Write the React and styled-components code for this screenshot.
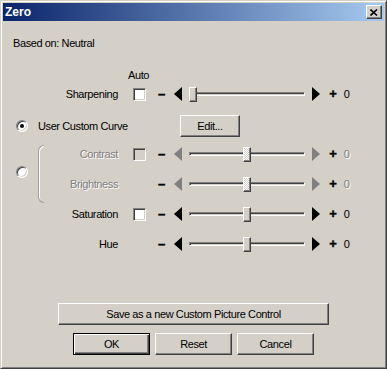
import React from "react";
import styled, { createGlobalStyle, css } from "styled-components";

const FACE = "#d4d0c8";

const GlobalStyle = createGlobalStyle`
  html, body {
    margin: 0;
    padding: 0;
    background: ${FACE};
  }
  body {
    font-family: "Liberation Sans", Arial, sans-serif;
    font-size: 11px;
    letter-spacing: -0.4px;
    color: #000;
  }
`;

const etched = css`
  color: #808080;
  text-shadow: 1px 1px #fff;
`;

const Window = styled.div`
  box-sizing: border-box;
  width: 387px;
  height: 369px;
  display: flex;
  flex-direction: column;
  padding: 2px;
  background: ${FACE};
  border: 1px solid;
  border-color: ${FACE} #404040 #404040 ${FACE};
  box-shadow: inset 1px 1px #fff, inset -1px -1px #808080;
`;

const TitleBar = styled.div`
  height: 18px;
  flex-shrink: 0;
  display: flex;
  align-items: center;
  justify-content: space-between;
  padding: 0 2px;
  background: linear-gradient(to right, #0a246a, #a6caf0);
`;

const Title = styled.span`
  color: #fff;
  font-weight: bold;
  font-size: 12px;
  letter-spacing: 0;
`;

const CloseButton = styled.div`
  box-sizing: border-box;
  width: 16px;
  height: 14px;
  display: flex;
  align-items: center;
  justify-content: center;
  background: ${FACE};
  border: 1px solid;
  border-color: #fff #404040 #404040 #fff;
  box-shadow: inset -1px -1px #808080;
`;

const Body = styled.div`
  flex: 1;
  display: flex;
  flex-direction: column;
  padding: 15px 10px 11px 10px;
`;

const Line = styled.div`
  line-height: 14px;
  height: 14px;
  margin-top: ${(p) => p.$mt || 0}px;
  margin-left: ${(p) => p.$ml || 0}px;
`;

const Row = styled.div`
  display: flex;
  align-items: center;
  height: 22px;
  margin-top: ${(p) => p.$mt || 0}px;
`;

const Label = styled.div`
  flex: 0 0 ${(p) => p.$width}px;
  text-align: ${(p) => p.$align || "right"};
  white-space: nowrap;
  ${(p) => p.$disabled && etched}
`;

const CheckSlot = styled.div`
  flex: 0 0 13px;
  height: 13px;
  margin-left: 15px;
`;

const CheckBox = styled.div`
  box-sizing: border-box;
  width: 13px;
  height: 13px;
  background: ${(p) => (p.$disabled ? FACE : "#fff")};
  border: 1px solid;
  border-color: #808080 #fff #fff #808080;
  box-shadow: inset 1px 1px #404040, inset -1px -1px ${FACE};
`;

const Sign = styled.span`
  flex: 0 0 7px;
  margin-left: ${(p) => p.$ml}px;
  font-weight: bold;
  font-size: 13px;
  line-height: 14px;
  text-align: center;
  letter-spacing: 0;
  -webkit-text-stroke: 0.4px #000;
`;

const ArrowBox = styled.svg`
  flex: 0 0 8px;
  margin-left: ${(p) => p.$ml}px;
`;

const Track = styled.div`
  position: relative;
  flex: 0 0 116px;
  height: 15px;
  margin-left: 7px;
  display: flex;
  align-items: center;
`;

const Channel = styled.div`
  box-sizing: border-box;
  width: 100%;
  height: 4px;
  margin-top: -1px;
  border: 1px solid;
  border-color: #808080 #fff #fff #808080;
  box-shadow: inset 1px 1px #404040;
`;

const Thumb = styled.div`
  position: absolute;
  top: 0;
  box-sizing: border-box;
  width: 8px;
  height: 15px;
  border: 1px solid;
  border-color: #fff #404040 #404040 #fff;
  box-shadow: inset -1px -1px #808080;
  background: ${FACE};
  ${(p) =>
    p.$disabled &&
    css`
      background: repeating-conic-gradient(#fff 0 25%, ${FACE} 0 50%) 0 0 / 2px 2px;
    `}
`;

const Value = styled.span`
  margin-left: 7px;
  ${(p) => p.$disabled && etched}
`;

const Radio = styled.div`
  box-sizing: border-box;
  flex: 0 0 12px;
  width: 12px;
  height: 12px;
  margin-left: 3px;
  margin-top: ${(p) => p.$mt || 0}px;
  align-self: ${(p) => (p.$mt ? "flex-start" : "center")};
  border-radius: 50%;
  background: #fff;
  border: 1px solid;
  border-color: #808080 #fff #fff #808080;
  box-shadow: inset 1px 1px #404040, inset -1px -1px ${FACE};
  display: flex;
  align-items: center;
  justify-content: center;
  &::after {
    content: "";
    display: ${(p) => (p.$checked ? "block" : "none")};
    width: 4px;
    height: 4px;
    border-radius: 50%;
    background: #000;
  }
`;

const Group = styled.div`
  display: flex;
  margin-top: 6px;
`;

const Bracket = styled.div`
  box-sizing: border-box;
  flex: 0 0 6px;
  height: 58px;
  margin: 2px 0 0 10px;
  border: 1px solid #a0a0a0;
  border-right: none;
  border-radius: 6px 0 0 6px;
  box-shadow: inset 1px 1px #fff;
`;

const GroupRows = styled.div`
  display: flex;
  flex-direction: column;
  gap: 8px;
`;

const Button = styled.div`
  box-sizing: border-box;
  width: ${(p) => p.$width}px;
  height: 22px;
  display: flex;
  align-items: center;
  justify-content: center;
  flex-shrink: 0;
  margin-left: ${(p) => p.$ml || 0}px;
  background: ${FACE};
  border: 1px solid;
  border-color: #fff #404040 #404040 #fff;
  box-shadow: inset -1px -1px #808080;
  ${(p) =>
    p.$default &&
    css`
      border-color: #000;
      box-shadow: inset 1px 1px #fff, inset -1px -1px #404040, inset -2px -2px #808080;
    `}
`;

const Footer = styled.div`
  margin-top: auto;
  display: flex;
  flex-direction: column;
  align-items: center;
  gap: 8px;
`;

const ButtonRow = styled.div`
  display: flex;
  gap: 5px;
`;

const Arrow = ({ dir, disabled, ml }) => (
  <ArrowBox $ml={ml} width="8" height="14" viewBox="0 0 8 14">
    <polygon
      points={dir === "left" ? "8,0 8,14 0,7" : "0,0 0,14 8,7"}
      fill={disabled ? "#808080" : "#000"}
    />
  </ArrowBox>
);

const SliderRow = ({ label, labelWidth = 105, check, disabled, pos, mt }) => (
  <Row $mt={mt}>
    <Label $width={labelWidth} $disabled={disabled}>
      {label}
    </Label>
    <CheckSlot>{check && <CheckBox $disabled={disabled} />}</CheckSlot>
    <Sign $ml={12}>–</Sign>
    <Arrow dir="left" disabled={disabled} ml={9} />
    <Track>
      <Channel />
      <Thumb $disabled={disabled} style={{ left: Math.round(pos * 108) }} />
    </Track>
    <Arrow dir="right" disabled={disabled} ml={7} />
    <Sign $ml={9}>+</Sign>
    <Value $disabled={disabled}>0</Value>
  </Row>
);

export default function App() {
  return (
    <>
      <GlobalStyle />
      <Window>
        <TitleBar>
          <Title>Zero</Title>
          <CloseButton>
            <svg width="8" height="7" viewBox="0 0 8 7">
              <path d="M0.5 0.5 L7 6.5 M7 0.5 L0.5 6.5" stroke="#000" strokeWidth="1.6" />
            </svg>
          </CloseButton>
        </TitleBar>
        <Body>
          <Line>Based on: Neutral</Line>
          <Line $mt={18} $ml={115}>Auto</Line>
          <SliderRow label="Sharpening" check pos={0} mt={1} />
          <Row $mt={10}>
            <Radio $checked />
            <Label $width={142} $align="left" style={{ marginLeft: 10 }}>
              User Custom Curve
            </Label>
            <Button $width={60}>Edit...</Button>
          </Row>
          <Group>
            <Radio $mt={23} />
            <Bracket />
            <GroupRows>
              <SliderRow label="Contrast" labelWidth={74} check disabled pos={0.5} />
              <SliderRow label="Brightness" labelWidth={74} disabled pos={0.5} />
            </GroupRows>
          </Group>
          <SliderRow label="Saturation" check pos={0.5} mt={0} />
          <SliderRow label="Hue" pos={0.5} mt={8} />
          <Footer>
            <Button $width={271}>Save as a new Custom Picture Control</Button>
            <ButtonRow>
              <Button $width={77} $default>OK</Button>
              <Button $width={77}>Reset</Button>
              <Button $width={77}>Cancel</Button>
            </ButtonRow>
          </Footer>
        </Body>
      </Window>
    </>
  );
}
